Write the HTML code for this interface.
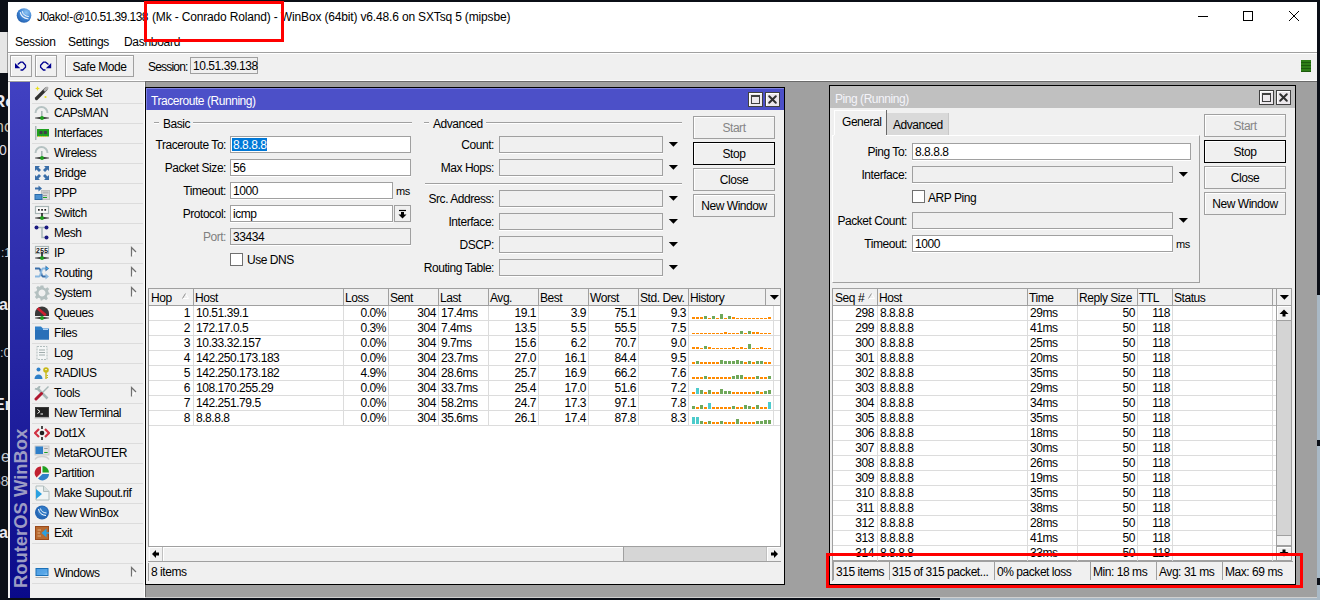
<!DOCTYPE html>
<html><head><meta charset="utf-8"><style>
html,body{margin:0;padding:0;width:1320px;height:600px;overflow:hidden;background:#0b0f17}
div,span,svg{position:absolute}
.t{font-family:"Liberation Sans",sans-serif;white-space:nowrap;line-height:14px;color:#000}
</style></head><body>
<div style="left:0px;top:0px;width:1320px;height:600px;background:#0b0f17"></div>
<div style="left:0px;top:32px;width:8px;height:41px;background:#e6e6e6"></div>
<div style="left:7px;top:32px;width:1px;height:41px;background:#9a9a9a"></div>
<div style="left:940px;top:598px;width:380px;height:2px;background:#a9b9c6"></div>
<div style="left:0;top:0;width:8px;height:600px;overflow:hidden">
<span class="t" style="left:-7px;top:93px;line-height:18px;font-weight:bold;font-size:17px;color:#e8e8f0">Ro</span>
<span class="t" style="left:-5px;top:118px;line-height:18px;font-size:16px;color:#c8c0b0">nc</span>
<span class="t" style="left:-1px;top:141px;line-height:18px;font-size:14px;color:#d8d8e0">0</span>
<span class="t" style="left:1px;top:244px;line-height:18px;font-size:12px;color:#c0c8d0">:1</span>
<span class="t" style="left:-1px;top:296px;line-height:18px;font-weight:bold;font-size:16px;color:#e8e8f0">a</span>
<span class="t" style="left:0px;top:344px;line-height:18px;font-size:13px;color:#c0c8d0">:0</span>
<span class="t" style="left:-6px;top:396px;line-height:18px;font-weight:bold;font-size:16px;color:#e8e8f0">Er</span>
<span class="t" style="left:1px;top:448px;line-height:18px;font-size:16px;color:#c0c8d0">e</span>
<span class="t" style="left:-7px;top:472px;line-height:18px;font-size:14px;color:#c0c8d0">58</span>
<span class="t" style="left:-1px;top:524px;line-height:18px;font-weight:bold;font-size:16px;color:#e8e8f0">a</span>
</div>
<div style="left:8px;top:2px;width:1309px;height:50px;background:#fff"></div>
<div style="left:8px;top:52px;width:1309px;height:1px;background:#a0a0a0"></div>
<div style="left:8px;top:53px;width:1309px;height:1px;background:#fff"></div>
<div style="left:8px;top:54px;width:1309px;height:26px;background:#f0f0f0"></div>
<div style="left:8px;top:80px;width:1309px;height:1px;background:#fff"></div>
<div style="left:8px;top:81px;width:137px;height:1px;background:#a0a0a0"></div>
<svg style="left:16px;top:8px" width="16" height="16" viewBox="0 0 16 16"><defs><radialGradient id="lg" cx="0.65" cy="0.3" r="0.8"><stop offset="0" stop-color="#8cc4f4"/><stop offset="0.6" stop-color="#3a7fcf"/><stop offset="1" stop-color="#1f5aa8"/></radialGradient></defs><circle cx="8" cy="7.5" r="7.3" fill="url(#lg)"/><path d="M4.2 4.2 Q5 10 12.5 11" stroke="#fff" stroke-width="1.1" fill="none" opacity="0.9"/><path d="M6.3 3.2 Q7 8 12.8 8.6" stroke="#fff" stroke-width="1" fill="none" opacity="0.9"/></svg>
<span class="t" style="left:37px;top:10px;font-size:12px;letter-spacing:-0.53px;color:#000">J0ako!-@10.51.39.138</span>
<span class="t" style="left:152px;top:10px;font-size:12px;letter-spacing:-0.16px;color:#000">(Mk - Conrado Roland) - WinBox (64bit) v6.48.6 on SXTsq 5 (mipsbe)</span>
<div style="left:1198px;top:16px;width:10px;height:1px;background:#000"></div>
<div style="left:1243px;top:11px;width:10px;height:10px;border:1px solid #000;box-sizing:border-box"></div>
<svg style="left:1288px;top:10px" width="12" height="12" viewBox="0 0 12 12"><path d="M1 1L11 11M11 1L1 11" stroke="#000" stroke-width="1"/></svg>
<span class="t" style="left:15px;top:35px;font-size:12px;letter-spacing:-0.3px;">Session</span>
<span class="t" style="left:68px;top:35px;font-size:12px;letter-spacing:-0.3px;">Settings</span>
<span class="t" style="left:124px;top:35px;font-size:12px;letter-spacing:-0.3px;">Dashboard</span>
<div style="left:10px;top:55px;width:22px;height:22px;background:#f0f0f0;border:1px solid #a0a0a0;box-sizing:border-box;box-shadow:inset 1px 1px #fff;"></div>
<div style="left:35px;top:55px;width:22px;height:22px;background:#f0f0f0;border:1px solid #a0a0a0;box-sizing:border-box;box-shadow:inset 1px 1px #fff;"></div>
<svg style="left:10px;top:55px" width="22" height="22" viewBox="10 55 22 22"><path d="M15 63V68.3H20.3Z" fill="#000090"/><path d="M17.7 64.6L20.6 62.2H22.8L25.5 65.2V67.2L22.7 70H20.5" stroke="#000090" stroke-width="1.3" fill="none"/></svg>
<svg style="left:35px;top:55px" width="22" height="22" viewBox="35 55 22 22"><path d="M51.2 63V68.3H45.9Z" fill="#000090"/><path d="M48.5 64.6L45.6 62.2H43.4L40.6 65.2V67.2L43.4 70H45.5" stroke="#000090" stroke-width="1.3" fill="none"/></svg>
<div style="left:65px;top:55px;width:69px;height:22px;background:#f0f0f0;border:1px solid #a0a0a0;box-sizing:border-box;box-shadow:inset 1px 1px #fff;"></div>
<span class="t" style="left:65px;width:69px;text-align:center;top:60px;font-size:12px;letter-spacing:-0.45px;">Safe Mode</span>
<span class="t" style="left:148px;top:60px;font-size:12px;letter-spacing:-0.8px;">Session:</span>
<div style="left:190px;top:57px;width:68px;height:17px;background:#f0f0f0;border:1px solid #a0a0a0;box-sizing:border-box"></div>
<span class="t" style="left:193px;top:59px;font-size:12px;letter-spacing:-0.45px;">10.51.39.138</span>
<div style="left:1301px;top:60px;width:10px;height:12px;background:#2e7d17;background-image:repeating-linear-gradient(#2e7d17 0 2px,#1c5a0c 2px 3px)"></div>
<div style="left:8px;top:82px;width:137px;height:516px;background:#f0f0f0"></div>
<div style="left:10px;top:82px;width:20px;height:516px;background:linear-gradient(#4141c2,#2424a2 55%,#0a0a8a)"></div>
<div style="left:144px;top:82px;width:1px;height:516px;background:#fff"></div>
<span class="t" style="left:14px;top:588px;font-size:18.4px;font-weight:bold;letter-spacing:0px;color:#9c9cc4;transform-origin:0 0;transform:rotate(-90deg)">RouterOS WinBox</span>
<div style="left:32px;top:103px;width:111px;height:1px;background:#dcdcdc"></div>
<span class="t" style="left:54px;top:86px;font-size:12px;letter-spacing:-0.45px;">Quick Set</span>
<svg style="left:34px;top:85px" width="16" height="16" viewBox="0 0 16 16"><defs><linearGradient id="fade" gradientUnits="userSpaceOnUse" x1="0" y1="0" x2="16" y2="0"><stop offset="0" stop-color="#000" stop-opacity="0.15"/><stop offset="0.5" stop-color="#000"/><stop offset="1" stop-color="#000" stop-opacity="0.15"/></linearGradient></defs><path d="M2.5 13.5 L12 4" stroke="#303030" stroke-width="3.2" stroke-linecap="round"/><path d="M11 5 L13 3" stroke="#b0b0b0" stroke-width="3" stroke-linecap="round"/><path d="M3.5 1 L4.2 2.8 L6 3.5 L4.2 4.2 L3.5 6 L2.8 4.2 L1 3.5 L2.8 2.8Z" fill="#e8e020"/><circle cx="11.5" cy="12" r="1.1" fill="#e8e020"/></svg>
<div style="left:32px;top:123px;width:111px;height:1px;background:#dcdcdc"></div>
<span class="t" style="left:54px;top:106px;font-size:12px;letter-spacing:-0.45px;">CAPsMAN</span>
<svg style="left:34px;top:105px" width="16" height="16" viewBox="0 0 16 16"><defs><linearGradient id="fade" gradientUnits="userSpaceOnUse" x1="0" y1="0" x2="16" y2="0"><stop offset="0" stop-color="#000" stop-opacity="0.15"/><stop offset="0.5" stop-color="#000"/><stop offset="1" stop-color="#000" stop-opacity="0.15"/></linearGradient></defs><path d="M1.5 8 A6 6 0 0 1 13.5 8" stroke="#b5c2c2" stroke-width="2" fill="none"/><rect x="7" y="6" width="1.6" height="7" fill="#a8b5b5"/><path d="M1 13H15" stroke="url(#fade)" stroke-width="2"/><circle cx="8" cy="13" r="2" fill="#1fa01f"/></svg>
<div style="left:32px;top:143px;width:111px;height:1px;background:#dcdcdc"></div>
<span class="t" style="left:54px;top:126px;font-size:12px;letter-spacing:-0.45px;">Interfaces</span>
<svg style="left:34px;top:125px" width="16" height="16" viewBox="0 0 16 16"><defs><linearGradient id="fade" gradientUnits="userSpaceOnUse" x1="0" y1="0" x2="16" y2="0"><stop offset="0" stop-color="#000" stop-opacity="0.15"/><stop offset="0.5" stop-color="#000"/><stop offset="1" stop-color="#000" stop-opacity="0.15"/></linearGradient></defs><rect x="1" y="1" width="1.5" height="14" fill="#a9b7b7"/><rect x="3" y="4" width="12" height="7.5" fill="#20a020"/><rect x="5.5" y="6" width="3" height="3" fill="#404048"/><rect x="9.8" y="6" width="3" height="3" fill="#404048"/><path d="M4 11.5H14" stroke="#e8d020" stroke-width="1" stroke-dasharray="1 1"/></svg>
<div style="left:32px;top:163px;width:111px;height:1px;background:#dcdcdc"></div>
<span class="t" style="left:54px;top:146px;font-size:12px;letter-spacing:-0.45px;">Wireless</span>
<svg style="left:34px;top:145px" width="16" height="16" viewBox="0 0 16 16"><defs><linearGradient id="fade" gradientUnits="userSpaceOnUse" x1="0" y1="0" x2="16" y2="0"><stop offset="0" stop-color="#000" stop-opacity="0.15"/><stop offset="0.5" stop-color="#000"/><stop offset="1" stop-color="#000" stop-opacity="0.15"/></linearGradient></defs><path d="M1.5 8 A6 6 0 0 1 13.5 8" stroke="#b5c2c2" stroke-width="2" fill="none"/><rect x="7" y="6" width="1.6" height="7" fill="#a8b5b5"/><path d="M1 13H15" stroke="url(#fade)" stroke-width="2"/><circle cx="8" cy="13" r="2" fill="#1fa01f"/></svg>
<div style="left:32px;top:183px;width:111px;height:1px;background:#dcdcdc"></div>
<span class="t" style="left:54px;top:166px;font-size:12px;letter-spacing:-0.45px;">Bridge</span>
<svg style="left:34px;top:165px" width="16" height="16" viewBox="0 0 16 16"><defs><linearGradient id="fade" gradientUnits="userSpaceOnUse" x1="0" y1="0" x2="16" y2="0"><stop offset="0" stop-color="#000" stop-opacity="0.15"/><stop offset="0.5" stop-color="#000"/><stop offset="1" stop-color="#000" stop-opacity="0.15"/></linearGradient></defs><g fill="#3a6ea8"><path d="M1 1H6L4.5 2.5L7 5L5 7L2.5 4.5L1 6Z"/><path d="M15 1H10L11.5 2.5L9 5L11 7L13.5 4.5L15 6Z"/><path d="M1 15H6L4.5 13.5L7 11L5 9L2.5 11.5L1 10Z"/><path d="M15 15H10L11.5 13.5L9 11L11 9L13.5 11.5L15 10Z"/></g></svg>
<div style="left:32px;top:203px;width:111px;height:1px;background:#dcdcdc"></div>
<span class="t" style="left:54px;top:186px;font-size:12px;letter-spacing:-0.45px;">PPP</span>
<svg style="left:34px;top:185px" width="16" height="16" viewBox="0 0 16 16"><defs><linearGradient id="fade" gradientUnits="userSpaceOnUse" x1="0" y1="0" x2="16" y2="0"><stop offset="0" stop-color="#000" stop-opacity="0.15"/><stop offset="0.5" stop-color="#000"/><stop offset="1" stop-color="#000" stop-opacity="0.15"/></linearGradient></defs><path d="M1 3.5H5" stroke="#3a6ea8" stroke-width="2"/><path d="M4.5 0.5L8 3.5L4.5 6.5Z" fill="#3a6ea8"/><rect x="7.5" y="5.5" width="8" height="9" fill="#d8d8d8" stroke="#c0c0c0" stroke-width="1"/><rect x="8.5" y="6.5" width="6" height="2" fill="#b8b8b8"/><rect x="9" y="10" width="4" height="0.8" fill="#909090"/><rect x="9" y="12" width="4" height="1" fill="#20a020"/><rect x="1" y="9.5" width="7" height="5" fill="#4a90d0" stroke="#2a6aa8" stroke-width="1"/></svg>
<div style="left:32px;top:223px;width:111px;height:1px;background:#dcdcdc"></div>
<span class="t" style="left:54px;top:206px;font-size:12px;letter-spacing:-0.45px;">Switch</span>
<svg style="left:34px;top:205px" width="16" height="16" viewBox="0 0 16 16"><defs><linearGradient id="fade" gradientUnits="userSpaceOnUse" x1="0" y1="0" x2="16" y2="0"><stop offset="0" stop-color="#000" stop-opacity="0.15"/><stop offset="0.5" stop-color="#000"/><stop offset="1" stop-color="#000" stop-opacity="0.15"/></linearGradient></defs><rect x="1.5" y="1.5" width="13" height="7" fill="#fafafa" stroke="#a8b5b5" stroke-width="1.2"/><rect x="4" y="4" width="1.7" height="1.7" fill="#202020"/><rect x="7.2" y="4" width="1.7" height="1.7" fill="#202020"/><rect x="10.4" y="4" width="1.7" height="1.7" fill="#202020"/><rect x="7.2" y="8" width="1.6" height="5" fill="#202020"/><path d="M1 13H15" stroke="url(#fade)" stroke-width="2"/><circle cx="8" cy="13" r="2" fill="#1fa01f"/></svg>
<div style="left:32px;top:243px;width:111px;height:1px;background:#dcdcdc"></div>
<span class="t" style="left:54px;top:226px;font-size:12px;letter-spacing:-0.45px;">Mesh</span>
<svg style="left:34px;top:225px" width="16" height="16" viewBox="0 0 16 16"><defs><linearGradient id="fade" gradientUnits="userSpaceOnUse" x1="0" y1="0" x2="16" y2="0"><stop offset="0" stop-color="#000" stop-opacity="0.15"/><stop offset="0.5" stop-color="#000"/><stop offset="1" stop-color="#000" stop-opacity="0.15"/></linearGradient></defs><path d="M3 2.5H12.5M8 2.5V12.5H12.5" stroke="#a8b8b8" stroke-width="1.5" fill="none"/><circle cx="2.5" cy="2.5" r="2" fill="#1a1a80"/><circle cx="12.5" cy="2.5" r="2" fill="#1a1a80"/><circle cx="12.5" cy="12.5" r="2" fill="#1a1a80"/></svg>
<div style="left:32px;top:263px;width:111px;height:1px;background:#dcdcdc"></div>
<span class="t" style="left:54px;top:246px;font-size:12px;letter-spacing:-0.45px;">IP</span>
<svg style="left:34px;top:245px" width="16" height="16" viewBox="0 0 16 16"><defs><linearGradient id="fade" gradientUnits="userSpaceOnUse" x1="0" y1="0" x2="16" y2="0"><stop offset="0" stop-color="#000" stop-opacity="0.15"/><stop offset="0.5" stop-color="#000"/><stop offset="1" stop-color="#000" stop-opacity="0.15"/></linearGradient></defs><rect x="1.5" y="1.5" width="13" height="7" fill="#fafafa" stroke="#a8b5b5" stroke-width="1.2"/><text x="8" y="7.6" font-family="Liberation Mono" font-weight="bold" font-size="7" text-anchor="middle" fill="#202020">255</text><rect x="7.2" y="8" width="1.6" height="5" fill="#202020"/><path d="M1 13H15" stroke="url(#fade)" stroke-width="2"/><circle cx="8" cy="13" r="2" fill="#1fa01f"/></svg>
<svg style="left:129px;top:246px" width="8" height="12" viewBox="0 0 8 12"><path d="M6.5 6 L2.5 10" stroke="#fff" stroke-width="1.2"/><path d="M2.5 10.5 V1.5 L7 6" fill="none" stroke="#707070" stroke-width="1.2"/></svg>
<div style="left:32px;top:283px;width:111px;height:1px;background:#dcdcdc"></div>
<span class="t" style="left:54px;top:266px;font-size:12px;letter-spacing:-0.45px;">Routing</span>
<svg style="left:34px;top:265px" width="16" height="16" viewBox="0 0 16 16"><defs><linearGradient id="fade" gradientUnits="userSpaceOnUse" x1="0" y1="0" x2="16" y2="0"><stop offset="0" stop-color="#000" stop-opacity="0.15"/><stop offset="0.5" stop-color="#000"/><stop offset="1" stop-color="#000" stop-opacity="0.15"/></linearGradient></defs><path d="M1 3.5H5C7 3.5 7 11.5 9 11.5H12" stroke="#3a6ea8" stroke-width="2" fill="none"/><path d="M1 11.5H5C7 11.5 7 3.5 9 3.5H12" stroke="#8ab8e0" stroke-width="2" fill="none"/><path d="M11.5 0.5L15 3.5L11.5 6.5Z" fill="#3a6ea8"/><path d="M11.5 8.5L15 11.5L11.5 14.5Z" fill="#8ab8e0"/><circle cx="13" cy="3.5" r="1" fill="#40b0f0"/></svg>
<svg style="left:129px;top:266px" width="8" height="12" viewBox="0 0 8 12"><path d="M6.5 6 L2.5 10" stroke="#fff" stroke-width="1.2"/><path d="M2.5 10.5 V1.5 L7 6" fill="none" stroke="#707070" stroke-width="1.2"/></svg>
<div style="left:32px;top:303px;width:111px;height:1px;background:#dcdcdc"></div>
<span class="t" style="left:54px;top:286px;font-size:12px;letter-spacing:-0.45px;">System</span>
<svg style="left:34px;top:285px" width="16" height="16" viewBox="0 0 16 16"><defs><linearGradient id="fade" gradientUnits="userSpaceOnUse" x1="0" y1="0" x2="16" y2="0"><stop offset="0" stop-color="#000" stop-opacity="0.15"/><stop offset="0.5" stop-color="#000"/><stop offset="1" stop-color="#000" stop-opacity="0.15"/></linearGradient></defs><g fill="#b4c0c0"><path fill-rule="evenodd" d="M6.6 0.5H9.4L9.8 2.6L11.6 3.4L13.4 2.2L15.2 4L14 5.8L14.7 7.6L15.5 8V9.4L13.6 9.8L12.8 11.6L13.9 13.4L12.1 15.2L10.3 14L8.5 14.7L8.1 15.5H6.7L6.3 13.6L4.5 12.8L2.7 13.9L0.9 12.1L2.1 10.3L1.4 8.5L0.5 8.1V6.7L2.4 6.3L3.2 4.5L2.1 2.7L3.9 0.9L5.7 2.1L6.2 1.4Z M8 4.5A3.5 3.5 0 1 0 8.01 4.5Z"/></g></svg>
<svg style="left:129px;top:286px" width="8" height="12" viewBox="0 0 8 12"><path d="M6.5 6 L2.5 10" stroke="#fff" stroke-width="1.2"/><path d="M2.5 10.5 V1.5 L7 6" fill="none" stroke="#707070" stroke-width="1.2"/></svg>
<div style="left:32px;top:323px;width:111px;height:1px;background:#dcdcdc"></div>
<span class="t" style="left:54px;top:306px;font-size:12px;letter-spacing:-0.45px;">Queues</span>
<svg style="left:34px;top:305px" width="16" height="16" viewBox="0 0 16 16"><defs><linearGradient id="fade" gradientUnits="userSpaceOnUse" x1="0" y1="0" x2="16" y2="0"><stop offset="0" stop-color="#000" stop-opacity="0.15"/><stop offset="0.5" stop-color="#000"/><stop offset="1" stop-color="#000" stop-opacity="0.15"/></linearGradient></defs><path d="M1 11V8.5A7 7 0 0 1 15 8.5V11Z" fill="#383838"/><path d="M3.6 3.2 L11.8 10.2" stroke="#d02030" stroke-width="2.6"/><path d="M1 13H15" stroke="url(#fade)" stroke-width="2"/><circle cx="8" cy="13" r="2" fill="#1fa01f"/></svg>
<div style="left:32px;top:343px;width:111px;height:1px;background:#dcdcdc"></div>
<span class="t" style="left:54px;top:326px;font-size:12px;letter-spacing:-0.45px;">Files</span>
<svg style="left:34px;top:325px" width="16" height="16" viewBox="0 0 16 16"><defs><linearGradient id="fade" gradientUnits="userSpaceOnUse" x1="0" y1="0" x2="16" y2="0"><stop offset="0" stop-color="#000" stop-opacity="0.15"/><stop offset="0.5" stop-color="#000"/><stop offset="1" stop-color="#000" stop-opacity="0.15"/></linearGradient></defs><path d="M1 1.5H7L9 3.5H15V14.5H1Z" fill="#2f7fc8"/><path d="M1 5H15V14.5H1Z" fill="#2a70b8"/><rect x="9" y="4" width="5" height="0.8" fill="#d8ecff"/></svg>
<div style="left:32px;top:363px;width:111px;height:1px;background:#dcdcdc"></div>
<span class="t" style="left:54px;top:346px;font-size:12px;letter-spacing:-0.45px;">Log</span>
<svg style="left:34px;top:345px" width="16" height="16" viewBox="0 0 16 16"><defs><linearGradient id="fade" gradientUnits="userSpaceOnUse" x1="0" y1="0" x2="16" y2="0"><stop offset="0" stop-color="#000" stop-opacity="0.15"/><stop offset="0.5" stop-color="#000"/><stop offset="1" stop-color="#000" stop-opacity="0.15"/></linearGradient></defs><path d="M3 1.5H13V14.5H3Z" fill="#f4f6f6" stroke="#b0bcbc" stroke-width="1" stroke-dasharray="2 1"/><path d="M5 5H11M5 7.5H11M5 10H11" stroke="#a0acac" stroke-width="1"/></svg>
<div style="left:32px;top:383px;width:111px;height:1px;background:#dcdcdc"></div>
<span class="t" style="left:54px;top:366px;font-size:12px;letter-spacing:-0.45px;">RADIUS</span>
<svg style="left:34px;top:365px" width="16" height="16" viewBox="0 0 16 16"><defs><linearGradient id="fade" gradientUnits="userSpaceOnUse" x1="0" y1="0" x2="16" y2="0"><stop offset="0" stop-color="#000" stop-opacity="0.15"/><stop offset="0.5" stop-color="#000"/><stop offset="1" stop-color="#000" stop-opacity="0.15"/></linearGradient></defs><circle cx="4.5" cy="4.5" r="2" fill="#2f7fc8"/><path d="M0.5 14 C0.5 8 8.5 8 8.5 14Z" fill="#2f7fc8"/><circle cx="12" cy="5" r="2.8" fill="#c8b818"/><rect x="11.3" y="7" width="1.4" height="7" fill="#c8b818"/><rect x="12.5" y="10" width="1.5" height="1" fill="#c8b818"/><rect x="12.5" y="12" width="1.5" height="1" fill="#c8b818"/><rect x="11" y="4.3" width="2" height="0.8" fill="#fff"/></svg>
<div style="left:32px;top:403px;width:111px;height:1px;background:#dcdcdc"></div>
<span class="t" style="left:54px;top:386px;font-size:12px;letter-spacing:-0.45px;">Tools</span>
<svg style="left:34px;top:385px" width="16" height="16" viewBox="0 0 16 16"><defs><linearGradient id="fade" gradientUnits="userSpaceOnUse" x1="0" y1="0" x2="16" y2="0"><stop offset="0" stop-color="#000" stop-opacity="0.15"/><stop offset="0.5" stop-color="#000"/><stop offset="1" stop-color="#000" stop-opacity="0.15"/></linearGradient></defs><path d="M3 3 L13.5 13.5" stroke="#a8b8b8" stroke-width="2.5"/><path d="M1 3.5A3 3 0 0 0 5.5 1" stroke="#a8b8b8" stroke-width="2" fill="none"/><path d="M14.5 1.5 L8 8" stroke="#a8b8b8" stroke-width="1.5"/><path d="M2 14 L7.5 8.5" stroke="#b01830" stroke-width="3" stroke-linecap="round"/></svg>
<svg style="left:129px;top:386px" width="8" height="12" viewBox="0 0 8 12"><path d="M6.5 6 L2.5 10" stroke="#fff" stroke-width="1.2"/><path d="M2.5 10.5 V1.5 L7 6" fill="none" stroke="#707070" stroke-width="1.2"/></svg>
<div style="left:32px;top:423px;width:111px;height:1px;background:#dcdcdc"></div>
<span class="t" style="left:54px;top:406px;font-size:12px;letter-spacing:-0.45px;">New Terminal</span>
<svg style="left:34px;top:405px" width="16" height="16" viewBox="0 0 16 16"><defs><linearGradient id="fade" gradientUnits="userSpaceOnUse" x1="0" y1="0" x2="16" y2="0"><stop offset="0" stop-color="#000" stop-opacity="0.15"/><stop offset="0.5" stop-color="#000"/><stop offset="1" stop-color="#000" stop-opacity="0.15"/></linearGradient></defs><rect x="1" y="2" width="14" height="10.5" fill="#383838"/><rect x="2" y="3" width="12" height="8.5" fill="#202020"/><path d="M3.5 4.5L6 6.5L3.5 8.5" stroke="#fff" stroke-width="1" fill="none"/><path d="M6.5 9H9" stroke="#fff" stroke-width="1"/><path d="M0.5 13H15.5" stroke="#c0c0c0" stroke-width="1"/></svg>
<div style="left:32px;top:443px;width:111px;height:1px;background:#dcdcdc"></div>
<span class="t" style="left:54px;top:426px;font-size:12px;letter-spacing:-0.45px;">Dot1X</span>
<svg style="left:34px;top:425px" width="16" height="16" viewBox="0 0 16 16"><defs><linearGradient id="fade" gradientUnits="userSpaceOnUse" x1="0" y1="0" x2="16" y2="0"><stop offset="0" stop-color="#000" stop-opacity="0.15"/><stop offset="0.5" stop-color="#000"/><stop offset="1" stop-color="#000" stop-opacity="0.15"/></linearGradient></defs><path d="M5 4L1 8L5 12" stroke="#d03040" stroke-width="2.2" fill="none"/><path d="M11 4L15 8L11 12" stroke="#d03040" stroke-width="2.2" fill="none"/><circle cx="8" cy="8" r="2.3" fill="#202020"/><rect x="7.2" y="1" width="1.6" height="3" fill="#202020"/><rect x="7.2" y="12" width="1.6" height="3" fill="#202020"/></svg>
<div style="left:32px;top:463px;width:111px;height:1px;background:#dcdcdc"></div>
<span class="t" style="left:54px;top:446px;font-size:12px;letter-spacing:-0.45px;">MetaROUTER</span>
<svg style="left:34px;top:445px" width="16" height="16" viewBox="0 0 16 16"><defs><linearGradient id="fade" gradientUnits="userSpaceOnUse" x1="0" y1="0" x2="16" y2="0"><stop offset="0" stop-color="#000" stop-opacity="0.15"/><stop offset="0.5" stop-color="#000"/><stop offset="1" stop-color="#000" stop-opacity="0.15"/></linearGradient></defs><rect x="1" y="1" width="14" height="9" fill="#e0e0e0" stroke="#c0c0c0" stroke-width="0.8"/><rect x="1.5" y="1.5" width="7.5" height="7.5" fill="#2f7fc8"/><rect x="10.2" y="3" width="3.5" height="1" fill="#a0a0a0"/><rect x="10.2" y="7" width="3.5" height="1" fill="#20a020"/><path d="M1 14.5 C3 10.5 13 10.5 15 14.5" stroke="#d0d0d0" stroke-width="1.5" fill="none"/></svg>
<div style="left:32px;top:483px;width:111px;height:1px;background:#dcdcdc"></div>
<span class="t" style="left:54px;top:466px;font-size:12px;letter-spacing:-0.45px;">Partition</span>
<svg style="left:34px;top:465px" width="16" height="16" viewBox="0 0 16 16"><defs><linearGradient id="fade" gradientUnits="userSpaceOnUse" x1="0" y1="0" x2="16" y2="0"><stop offset="0" stop-color="#000" stop-opacity="0.15"/><stop offset="0.5" stop-color="#000"/><stop offset="1" stop-color="#000" stop-opacity="0.15"/></linearGradient></defs><path d="M7 1.5A6.5 6.5 0 0 0 2.5 12.5L7 8Z" fill="#c02030"/><path d="M8.5 1A6.5 6.5 0 0 1 15 7.5H8.5Z" fill="#20a020"/><path d="M15 9A6.5 6.5 0 0 1 4 13.5L8.5 9Z" fill="#2f7fc8"/></svg>
<div style="left:32px;top:503px;width:111px;height:1px;background:#dcdcdc"></div>
<span class="t" style="left:54px;top:486px;font-size:12px;letter-spacing:-0.45px;">Make Supout.rif</span>
<svg style="left:34px;top:485px" width="16" height="16" viewBox="0 0 16 16"><defs><linearGradient id="fade" gradientUnits="userSpaceOnUse" x1="0" y1="0" x2="16" y2="0"><stop offset="0" stop-color="#000" stop-opacity="0.15"/><stop offset="0.5" stop-color="#000"/><stop offset="1" stop-color="#000" stop-opacity="0.15"/></linearGradient></defs><path d="M2 1H9.5L15 6.5V15H2Z" fill="#f0f4f4" stroke="#b0bcbc" stroke-width="1"/><path d="M9.5 1V6.5H15" fill="#d8e0e0" stroke="#b0bcbc" stroke-width="1"/><path d="M2 4L8 9L2 14Z" fill="#2aa0e0"/></svg>
<div style="left:32px;top:523px;width:111px;height:1px;background:#dcdcdc"></div>
<span class="t" style="left:54px;top:506px;font-size:12px;letter-spacing:-0.45px;">New WinBox</span>
<svg style="left:34px;top:505px" width="16" height="16" viewBox="0 0 16 16"><defs><linearGradient id="fade" gradientUnits="userSpaceOnUse" x1="0" y1="0" x2="16" y2="0"><stop offset="0" stop-color="#000" stop-opacity="0.15"/><stop offset="0.5" stop-color="#000"/><stop offset="1" stop-color="#000" stop-opacity="0.15"/></linearGradient></defs><circle cx="8" cy="7.5" r="7" fill="#2566b4"/><circle cx="8.5" cy="6.5" r="5" fill="#3a86d0" opacity="0.6"/><path d="M4.5 4 Q5.5 10 12 10.5" stroke="#fff" stroke-width="1" fill="none"/><path d="M6.5 3.5 Q7.2 7.5 12.5 8" stroke="#fff" stroke-width="0.9" fill="none"/></svg>
<div style="left:32px;top:543px;width:111px;height:1px;background:#dcdcdc"></div>
<span class="t" style="left:54px;top:526px;font-size:12px;letter-spacing:-0.45px;">Exit</span>
<svg style="left:34px;top:525px" width="16" height="16" viewBox="0 0 16 16"><defs><linearGradient id="fade" gradientUnits="userSpaceOnUse" x1="0" y1="0" x2="16" y2="0"><stop offset="0" stop-color="#000" stop-opacity="0.15"/><stop offset="0.5" stop-color="#000"/><stop offset="1" stop-color="#000" stop-opacity="0.15"/></linearGradient></defs><rect x="1" y="1" width="14" height="14" fill="#9a4a1a"/><rect x="2" y="2" width="12" height="12" fill="#b86a30"/><path d="M3.5 5H7M3.5 8H6M3.5 11H7" stroke="#e0b080" stroke-width="1"/><path d="M7.5 8L12.5 3.5V12.5Z" fill="#2aa0e0"/><path d="M12 8H15" stroke="#2aa0e0" stroke-width="1.5"/></svg>
<div style="left:32px;top:563px;width:111px;height:1px;background:#dcdcdc"></div>
<div style="left:32px;top:583px;width:111px;height:1px;background:#dcdcdc"></div>
<span class="t" style="left:54px;top:566px;font-size:12px;letter-spacing:-0.45px;">Windows</span>
<svg style="left:34px;top:565px" width="16" height="16" viewBox="0 0 16 16"><defs><linearGradient id="wg" x1="0" y1="0" x2="1" y2="1"><stop offset="0" stop-color="#4a9ae0"/><stop offset="0.7" stop-color="#5aa8e8"/><stop offset="1" stop-color="#a8d4f4"/></linearGradient></defs><rect x="2" y="3.5" width="12" height="7" fill="url(#wg)" stroke="#1a70b8" stroke-width="1"/><path d="M1.5 12.5H14.5" stroke="#b0b0b0" stroke-width="1"/></svg>
<svg style="left:129px;top:566px" width="8" height="12" viewBox="0 0 8 12"><path d="M6.5 6 L2.5 10" stroke="#fff" stroke-width="1.2"/><path d="M2.5 10.5 V1.5 L7 6" fill="none" stroke="#707070" stroke-width="1.2"/></svg>
<div style="left:145px;top:81px;width:1172px;height:516px;background:#a0a0a0"></div>
<div style="left:145px;top:81px;width:1172px;height:1px;background:#6a6a6a"></div>
<div style="left:145px;top:81px;width:1px;height:516px;background:#6a6a6a"></div>
<div style="left:145px;top:597px;width:1172px;height:1px;background:#d0d0d0"></div>
<div style="left:145px;top:87px;width:640px;height:498px;background:#000"></div>
<div style="left:146px;top:88px;width:638px;height:496px;background:#f0f0f0"></div>
<div style="left:146px;top:88px;width:638px;height:22px;background:#4c50c8"></div>
<div style="left:146px;top:88px;width:638px;height:1px;background:#7f82e0"></div>
<div style="left:146px;top:88px;width:1px;height:22px;background:#7f82e0"></div>
<span class="t" style="left:151px;top:94px;font-size:12px;letter-spacing:-0.45px;color:#fff">Traceroute (Running)</span>
<div style="left:748px;top:92px;width:15px;height:15px;background:#ece8ec;border:1px solid #404040;box-shadow:inset 1px 1px #fff;box-sizing:border-box"></div>
<div style="left:751px;top:95px;width:9px;height:9px;border:1px solid #404040;border-top-width:2px;box-sizing:border-box"></div>
<div style="left:765px;top:92px;width:15px;height:15px;background:#ece8ec;border:1px solid #404040;box-shadow:inset 1px 1px #fff;box-sizing:border-box"></div>
<svg style="left:765px;top:92px" width="15" height="15" viewBox="0 0 15 15"><path d="M4.2 4.2L10.8 10.8M10.8 4.2L4.2 10.8" stroke="#303030" stroke-width="2" stroke-linecap="round"/></svg>
<div style="left:154px;top:122px;width:5px;height:1px;background:#a0a0a0"></div>
<div style="left:154px;top:123px;width:5px;height:1px;background:#fff"></div>
<span class="t" style="left:163px;top:117px;font-size:12px;letter-spacing:-0.45px;">Basic</span>
<div style="left:193px;top:122px;width:219px;height:1px;background:#a0a0a0"></div>
<div style="left:193px;top:123px;width:219px;height:1px;background:#fff"></div>
<div style="left:424px;top:122px;width:5px;height:1px;background:#a0a0a0"></div>
<div style="left:424px;top:123px;width:5px;height:1px;background:#fff"></div>
<span class="t" style="left:433px;top:117px;font-size:12px;letter-spacing:-0.45px;">Advanced</span>
<div style="left:486px;top:122px;width:196px;height:1px;background:#a0a0a0"></div>
<div style="left:486px;top:123px;width:196px;height:1px;background:#fff"></div>
<span class="t" style="right:1094px;top:138px;font-size:12px;letter-spacing:-0.45px;">Traceroute To:</span>
<div style="left:230px;top:136px;width:181px;height:17px;background:#fff;border:1px solid #a0a0a0;box-sizing:border-box"></div>
<div style="left:232px;top:138px;width:35px;height:13px;background:#0078d7"></div>
<span class="t" style="left:233px;top:138px;font-size:12px;letter-spacing:-0.45px;color:#fff">8.8.8.8</span>
<span class="t" style="right:1094px;top:161px;font-size:12px;letter-spacing:-0.45px;">Packet Size:</span>
<div style="left:230px;top:159px;width:181px;height:17px;background:#fff;border:1px solid #a0a0a0;box-sizing:border-box"></div>
<div style="left:230px;top:176px;width:181px;height:1px;background:#fff"></div>
<span class="t" style="left:233px;top:161px;font-size:12px;letter-spacing:-0.45px;color:#000">56</span>
<span class="t" style="right:1094px;top:184px;font-size:12px;letter-spacing:-0.45px;">Timeout:</span>
<div style="left:230px;top:182px;width:163px;height:17px;background:#fff;border:1px solid #a0a0a0;box-sizing:border-box"></div>
<div style="left:230px;top:199px;width:163px;height:1px;background:#fff"></div>
<span class="t" style="left:233px;top:184px;font-size:12px;letter-spacing:-0.45px;color:#000">1000</span>
<span class="t" style="left:396px;top:184px;font-size:11px;letter-spacing:-0.3px;">ms</span>
<span class="t" style="right:1094px;top:207px;font-size:12px;letter-spacing:-0.45px;">Protocol:</span>
<div style="left:230px;top:205px;width:163px;height:17px;background:#fff;border:1px solid #a0a0a0;box-sizing:border-box"></div>
<div style="left:230px;top:222px;width:163px;height:1px;background:#fff"></div>
<span class="t" style="left:233px;top:207px;font-size:12px;letter-spacing:-0.45px;color:#000">icmp</span>
<div style="left:394px;top:205px;width:17px;height:17px;background:#f0f0f0;border:1px solid #a0a0a0;box-sizing:border-box"></div>
<svg style="left:394px;top:205px" width="17" height="17" viewBox="0 0 17 17"><path d="M5 5.5H12" stroke="#000" stroke-width="1.2"/><rect x="7" y="7" width="3" height="3" fill="#000"/><path d="M4.5 9.5H12.5L8.5 13.5Z" fill="#000"/></svg>
<span class="t" style="right:1094px;top:230px;font-size:12px;letter-spacing:-0.45px;color:#808080">Port:</span>
<div style="left:230px;top:228px;width:181px;height:17px;background:#f0f0f0;border:1px solid #a0a0a0;box-sizing:border-box"></div>
<div style="left:230px;top:245px;width:181px;height:1px;background:#fff"></div>
<span class="t" style="left:233px;top:230px;font-size:12px;letter-spacing:-0.45px;color:#000">33434</span>
<div style="left:230px;top:253px;width:13px;height:13px;background:#fff;border:1px solid #707070;box-sizing:border-box"></div>
<span class="t" style="left:247px;top:253px;font-size:12px;letter-spacing:-0.45px;">Use DNS</span>
<span class="t" style="right:826px;top:138px;font-size:12px;letter-spacing:-0.45px;">Count:</span>
<div style="left:499px;top:136px;width:164px;height:17px;background:#f0f0f0;border:1px solid #a0a0a0;box-sizing:border-box"></div>
<div style="left:499px;top:153px;width:164px;height:1px;background:#fff"></div>
<svg style="left:668px;top:142px" width="11" height="6" viewBox="0 0 11 6"><path d="M0.8 0H10L5.4 4.8Z" fill="#000"/></svg>
<span class="t" style="right:826px;top:161px;font-size:12px;letter-spacing:-0.45px;">Max Hops:</span>
<div style="left:499px;top:159px;width:164px;height:17px;background:#f0f0f0;border:1px solid #a0a0a0;box-sizing:border-box"></div>
<div style="left:499px;top:176px;width:164px;height:1px;background:#fff"></div>
<svg style="left:668px;top:165px" width="11" height="6" viewBox="0 0 11 6"><path d="M0.8 0H10L5.4 4.8Z" fill="#000"/></svg>
<span class="t" style="right:826px;top:192px;font-size:12px;letter-spacing:-0.45px;">Src. Address:</span>
<div style="left:499px;top:190px;width:164px;height:17px;background:#f0f0f0;border:1px solid #a0a0a0;box-sizing:border-box"></div>
<div style="left:499px;top:207px;width:164px;height:1px;background:#fff"></div>
<svg style="left:668px;top:196px" width="11" height="6" viewBox="0 0 11 6"><path d="M0.8 0H10L5.4 4.8Z" fill="#000"/></svg>
<span class="t" style="right:826px;top:215px;font-size:12px;letter-spacing:-0.45px;">Interface:</span>
<div style="left:499px;top:213px;width:164px;height:17px;background:#f0f0f0;border:1px solid #a0a0a0;box-sizing:border-box"></div>
<div style="left:499px;top:230px;width:164px;height:1px;background:#fff"></div>
<svg style="left:668px;top:219px" width="11" height="6" viewBox="0 0 11 6"><path d="M0.8 0H10L5.4 4.8Z" fill="#000"/></svg>
<span class="t" style="right:826px;top:238px;font-size:12px;letter-spacing:-0.45px;">DSCP:</span>
<div style="left:499px;top:236px;width:164px;height:17px;background:#f0f0f0;border:1px solid #a0a0a0;box-sizing:border-box"></div>
<div style="left:499px;top:253px;width:164px;height:1px;background:#fff"></div>
<svg style="left:668px;top:242px" width="11" height="6" viewBox="0 0 11 6"><path d="M0.8 0H10L5.4 4.8Z" fill="#000"/></svg>
<span class="t" style="right:826px;top:261px;font-size:12px;letter-spacing:-0.45px;">Routing Table:</span>
<div style="left:499px;top:259px;width:164px;height:17px;background:#f0f0f0;border:1px solid #a0a0a0;box-sizing:border-box"></div>
<div style="left:499px;top:276px;width:164px;height:1px;background:#fff"></div>
<svg style="left:668px;top:265px" width="11" height="6" viewBox="0 0 11 6"><path d="M0.8 0H10L5.4 4.8Z" fill="#000"/></svg>
<div style="left:425px;top:183px;width:257px;height:1px;background:#a0a0a0"></div>
<div style="left:425px;top:184px;width:257px;height:1px;background:#fff"></div>
<div style="left:693px;top:116px;width:82px;height:23px;background:#f0f0f0;border:1px solid #a0a0a0;box-sizing:border-box;box-shadow:inset 1px 1px #fff;"></div>
<span class="t" style="left:693px;width:82px;text-align:center;top:121px;font-size:12px;letter-spacing:-0.45px;color:#858585">Start</span>
<div style="left:693px;top:142px;width:82px;height:23px;background:#f0f0f0;border:1px solid #000;box-sizing:border-box;box-shadow:inset 1px 1px #fff;"></div>
<span class="t" style="left:693px;width:82px;text-align:center;top:147px;font-size:12px;letter-spacing:-0.45px;">Stop</span>
<div style="left:693px;top:168px;width:82px;height:23px;background:#f0f0f0;border:1px solid #a0a0a0;box-sizing:border-box;box-shadow:inset 1px 1px #fff;"></div>
<span class="t" style="left:693px;width:82px;text-align:center;top:173px;font-size:12px;letter-spacing:-0.45px;">Close</span>
<div style="left:693px;top:194px;width:82px;height:23px;background:#f0f0f0;border:1px solid #a0a0a0;box-sizing:border-box;box-shadow:inset 1px 1px #fff;"></div>
<span class="t" style="left:693px;width:82px;text-align:center;top:199px;font-size:12px;letter-spacing:-0.45px;">New Window</span>
<div style="left:148px;top:288px;width:633px;height:259px;background:#fff;border:1px solid #a0a0a0;box-sizing:border-box"></div>
<div style="left:149px;top:289px;width:631px;height:16px;background:#f0f0f0"></div>
<div style="left:149px;top:305px;width:631px;height:1px;background:#a0a0a0"></div>
<span class="t" style="left:151px;top:291px;font-size:12px;letter-spacing:-0.45px;">Hop</span>
<div style="left:193px;top:289px;width:1px;height:16px;background:#a0a0a0"></div>
<div style="left:193px;top:306px;width:1px;height:120px;background:#dcdcdc"></div>
<span class="t" style="left:195px;top:291px;font-size:12px;letter-spacing:-0.45px;">Host</span>
<div style="left:343px;top:289px;width:1px;height:16px;background:#a0a0a0"></div>
<div style="left:343px;top:306px;width:1px;height:120px;background:#dcdcdc"></div>
<span class="t" style="left:345px;top:291px;font-size:12px;letter-spacing:-0.45px;">Loss</span>
<div style="left:388px;top:289px;width:1px;height:16px;background:#a0a0a0"></div>
<div style="left:388px;top:306px;width:1px;height:120px;background:#dcdcdc"></div>
<span class="t" style="left:390px;top:291px;font-size:12px;letter-spacing:-0.45px;">Sent</span>
<div style="left:438px;top:289px;width:1px;height:16px;background:#a0a0a0"></div>
<div style="left:438px;top:306px;width:1px;height:120px;background:#dcdcdc"></div>
<span class="t" style="left:440px;top:291px;font-size:12px;letter-spacing:-0.45px;">Last</span>
<div style="left:488px;top:289px;width:1px;height:16px;background:#a0a0a0"></div>
<div style="left:488px;top:306px;width:1px;height:120px;background:#dcdcdc"></div>
<span class="t" style="left:490px;top:291px;font-size:12px;letter-spacing:-0.45px;">Avg.</span>
<div style="left:538px;top:289px;width:1px;height:16px;background:#a0a0a0"></div>
<div style="left:538px;top:306px;width:1px;height:120px;background:#dcdcdc"></div>
<span class="t" style="left:540px;top:291px;font-size:12px;letter-spacing:-0.45px;">Best</span>
<div style="left:588px;top:289px;width:1px;height:16px;background:#a0a0a0"></div>
<div style="left:588px;top:306px;width:1px;height:120px;background:#dcdcdc"></div>
<span class="t" style="left:590px;top:291px;font-size:12px;letter-spacing:-0.45px;">Worst</span>
<div style="left:638px;top:289px;width:1px;height:16px;background:#a0a0a0"></div>
<div style="left:638px;top:306px;width:1px;height:120px;background:#dcdcdc"></div>
<span class="t" style="left:640px;top:291px;font-size:12px;letter-spacing:-0.45px;">Std. Dev.</span>
<div style="left:688px;top:289px;width:1px;height:16px;background:#a0a0a0"></div>
<div style="left:688px;top:306px;width:1px;height:120px;background:#dcdcdc"></div>
<span class="t" style="left:690px;top:291px;font-size:12px;letter-spacing:-0.45px;">History</span>
<div style="left:773px;top:306px;width:1px;height:120px;background:#dcdcdc"></div>
<div style="left:765px;top:289px;width:1px;height:16px;background:#a0a0a0"></div>
<svg style="left:769px;top:295px" width="11" height="6" viewBox="0 0 11 6"><path d="M0.8 0H10L5.4 4.8Z" fill="#000"/></svg>
<svg style="left:182px;top:293px" width="7" height="6" viewBox="0 0 7 6"><path d="M6.5 5.5H0.5" stroke="#fff" stroke-width="1"/><path d="M3.5 0.5L6.5 5.5" stroke="#fff" stroke-width="1"/><path d="M0.5 5.5L3.5 0.5" stroke="#909090" stroke-width="1"/></svg>
<div style="left:149px;top:320px;width:631px;height:1px;background:#dcdcdc"></div>
<span class="t" style="right:1130px;top:306px;font-size:12px;letter-spacing:-0.45px;">1</span>
<span class="t" style="left:196px;top:306px;font-size:12px;letter-spacing:-0.45px;">10.51.39.1</span>
<span class="t" style="right:934px;top:306px;font-size:12px;letter-spacing:-0.45px;">0.0%</span>
<span class="t" style="right:884px;top:306px;font-size:12px;letter-spacing:-0.45px;">304</span>
<span class="t" style="left:441px;top:306px;font-size:12px;letter-spacing:-0.45px;">17.4ms</span>
<span class="t" style="right:784px;top:306px;font-size:12px;letter-spacing:-0.45px;">19.1</span>
<span class="t" style="right:734px;top:306px;font-size:12px;letter-spacing:-0.45px;">3.9</span>
<span class="t" style="right:684px;top:306px;font-size:12px;letter-spacing:-0.45px;">75.1</span>
<span class="t" style="right:634px;top:306px;font-size:12px;letter-spacing:-0.45px;">9.3</span>
<svg style="left:692px;top:306px" width="80" height="14" viewBox="0 0 80 14"><rect x="0" y="11" width="3" height="2" fill="#ff8a00"/><rect x="4" y="11" width="3" height="2" fill="#ff8a00"/><rect x="8" y="11" width="3" height="2" fill="#ff8a00"/><rect x="12" y="10" width="3" height="3" fill="#6fa85a"/><rect x="16" y="12" width="3" height="1" fill="#ff8a00"/><rect x="20" y="10" width="3" height="3" fill="#6fa85a"/><rect x="24" y="12" width="3" height="1" fill="#ff8a00"/><rect x="28" y="8" width="3" height="5" fill="#6fa85a"/><rect x="32" y="12" width="3" height="1" fill="#ff8a00"/><rect x="36" y="10" width="3" height="3" fill="#6fa85a"/><rect x="40" y="11" width="3" height="2" fill="#ff8a00"/><rect x="44" y="12" width="3" height="1" fill="#ff8a00"/><rect x="48" y="12" width="3" height="1" fill="#ff8a00"/><rect x="52" y="12" width="3" height="1" fill="#ff8a00"/><rect x="56" y="12" width="3" height="1" fill="#ff8a00"/><rect x="60" y="12" width="3" height="1" fill="#ff8a00"/><rect x="64" y="12" width="3" height="1" fill="#ff8a00"/><rect x="68" y="12" width="3" height="1" fill="#ff8a00"/><rect x="72" y="12" width="3" height="1" fill="#ff8a00"/><rect x="76" y="11" width="3" height="2" fill="#ff8a00"/></svg>
<div style="left:149px;top:335px;width:631px;height:1px;background:#dcdcdc"></div>
<span class="t" style="right:1130px;top:321px;font-size:12px;letter-spacing:-0.45px;">2</span>
<span class="t" style="left:196px;top:321px;font-size:12px;letter-spacing:-0.45px;">172.17.0.5</span>
<span class="t" style="right:934px;top:321px;font-size:12px;letter-spacing:-0.45px;">0.3%</span>
<span class="t" style="right:884px;top:321px;font-size:12px;letter-spacing:-0.45px;">304</span>
<span class="t" style="left:441px;top:321px;font-size:12px;letter-spacing:-0.45px;">7.4ms</span>
<span class="t" style="right:784px;top:321px;font-size:12px;letter-spacing:-0.45px;">13.5</span>
<span class="t" style="right:734px;top:321px;font-size:12px;letter-spacing:-0.45px;">5.5</span>
<span class="t" style="right:684px;top:321px;font-size:12px;letter-spacing:-0.45px;">55.5</span>
<span class="t" style="right:634px;top:321px;font-size:12px;letter-spacing:-0.45px;">7.5</span>
<svg style="left:692px;top:321px" width="80" height="14" viewBox="0 0 80 14"><rect x="0" y="12" width="3" height="1" fill="#ff8a00"/><rect x="4" y="12" width="3" height="1" fill="#ff8a00"/><rect x="8" y="12" width="3" height="1" fill="#ff8a00"/><rect x="12" y="12" width="3" height="1" fill="#ff8a00"/><rect x="16" y="12" width="3" height="1" fill="#ff8a00"/><rect x="20" y="12" width="3" height="1" fill="#ff8a00"/><rect x="24" y="12" width="3" height="1" fill="#ff8a00"/><rect x="28" y="12" width="3" height="1" fill="#ff8a00"/><rect x="32" y="11" width="3" height="2" fill="#ff8a00"/><rect x="36" y="12" width="3" height="1" fill="#ff8a00"/><rect x="40" y="12" width="3" height="1" fill="#ff8a00"/><rect x="44" y="12" width="3" height="1" fill="#ff8a00"/><rect x="48" y="10" width="3" height="3" fill="#6fa85a"/><rect x="52" y="12" width="3" height="1" fill="#ff8a00"/><rect x="56" y="10" width="3" height="3" fill="#6fa85a"/><rect x="60" y="11" width="3" height="2" fill="#ff8a00"/><rect x="64" y="11" width="3" height="2" fill="#ff8a00"/><rect x="68" y="12" width="3" height="1" fill="#ff8a00"/><rect x="72" y="12" width="3" height="1" fill="#ff8a00"/><rect x="76" y="12" width="3" height="1" fill="#ff8a00"/></svg>
<div style="left:149px;top:350px;width:631px;height:1px;background:#dcdcdc"></div>
<span class="t" style="right:1130px;top:336px;font-size:12px;letter-spacing:-0.45px;">3</span>
<span class="t" style="left:196px;top:336px;font-size:12px;letter-spacing:-0.45px;">10.33.32.157</span>
<span class="t" style="right:934px;top:336px;font-size:12px;letter-spacing:-0.45px;">0.0%</span>
<span class="t" style="right:884px;top:336px;font-size:12px;letter-spacing:-0.45px;">304</span>
<span class="t" style="left:441px;top:336px;font-size:12px;letter-spacing:-0.45px;">9.7ms</span>
<span class="t" style="right:784px;top:336px;font-size:12px;letter-spacing:-0.45px;">15.6</span>
<span class="t" style="right:734px;top:336px;font-size:12px;letter-spacing:-0.45px;">6.2</span>
<span class="t" style="right:684px;top:336px;font-size:12px;letter-spacing:-0.45px;">70.7</span>
<span class="t" style="right:634px;top:336px;font-size:12px;letter-spacing:-0.45px;">9.0</span>
<svg style="left:692px;top:336px" width="80" height="14" viewBox="0 0 80 14"><rect x="0" y="11" width="3" height="2" fill="#ff8a00"/><rect x="4" y="11" width="3" height="2" fill="#ff8a00"/><rect x="8" y="12" width="3" height="1" fill="#ff8a00"/><rect x="12" y="10" width="3" height="3" fill="#6fa85a"/><rect x="16" y="11" width="3" height="2" fill="#ff8a00"/><rect x="20" y="12" width="3" height="1" fill="#ff8a00"/><rect x="24" y="12" width="3" height="1" fill="#ff8a00"/><rect x="28" y="12" width="3" height="1" fill="#ff8a00"/><rect x="32" y="12" width="3" height="1" fill="#ff8a00"/><rect x="36" y="12" width="3" height="1" fill="#ff8a00"/><rect x="40" y="11" width="3" height="2" fill="#ff8a00"/><rect x="44" y="12" width="3" height="1" fill="#ff8a00"/><rect x="48" y="11" width="3" height="2" fill="#ff8a00"/><rect x="52" y="12" width="3" height="1" fill="#ff8a00"/><rect x="56" y="8" width="3" height="5" fill="#6fa85a"/><rect x="60" y="12" width="3" height="1" fill="#ff8a00"/><rect x="64" y="12" width="3" height="1" fill="#ff8a00"/><rect x="68" y="11" width="3" height="2" fill="#ff8a00"/><rect x="72" y="12" width="3" height="1" fill="#ff8a00"/><rect x="76" y="12" width="3" height="1" fill="#ff8a00"/></svg>
<div style="left:149px;top:365px;width:631px;height:1px;background:#dcdcdc"></div>
<span class="t" style="right:1130px;top:351px;font-size:12px;letter-spacing:-0.45px;">4</span>
<span class="t" style="left:196px;top:351px;font-size:12px;letter-spacing:-0.45px;">142.250.173.183</span>
<span class="t" style="right:934px;top:351px;font-size:12px;letter-spacing:-0.45px;">0.0%</span>
<span class="t" style="right:884px;top:351px;font-size:12px;letter-spacing:-0.45px;">304</span>
<span class="t" style="left:441px;top:351px;font-size:12px;letter-spacing:-0.45px;">23.7ms</span>
<span class="t" style="right:784px;top:351px;font-size:12px;letter-spacing:-0.45px;">27.0</span>
<span class="t" style="right:734px;top:351px;font-size:12px;letter-spacing:-0.45px;">16.1</span>
<span class="t" style="right:684px;top:351px;font-size:12px;letter-spacing:-0.45px;">84.4</span>
<span class="t" style="right:634px;top:351px;font-size:12px;letter-spacing:-0.45px;">9.5</span>
<svg style="left:692px;top:351px" width="80" height="14" viewBox="0 0 80 14"><rect x="0" y="11" width="3" height="2" fill="#ff8a00"/><rect x="4" y="10" width="3" height="3" fill="#6fa85a"/><rect x="8" y="11" width="3" height="2" fill="#ff8a00"/><rect x="12" y="11" width="3" height="2" fill="#ff8a00"/><rect x="16" y="11" width="3" height="2" fill="#ff8a00"/><rect x="20" y="11" width="3" height="2" fill="#ff8a00"/><rect x="24" y="11" width="3" height="2" fill="#ff8a00"/><rect x="28" y="9" width="3" height="4" fill="#6fa85a"/><rect x="32" y="10" width="3" height="3" fill="#6fa85a"/><rect x="36" y="10" width="3" height="3" fill="#6fa85a"/><rect x="40" y="10" width="3" height="3" fill="#6fa85a"/><rect x="44" y="9" width="3" height="4" fill="#6fa85a"/><rect x="48" y="10" width="3" height="3" fill="#6fa85a"/><rect x="52" y="11" width="3" height="2" fill="#ff8a00"/><rect x="56" y="10" width="3" height="3" fill="#6fa85a"/><rect x="60" y="11" width="3" height="2" fill="#ff8a00"/><rect x="64" y="10" width="3" height="3" fill="#6fa85a"/><rect x="68" y="10" width="3" height="3" fill="#6fa85a"/><rect x="72" y="11" width="3" height="2" fill="#ff8a00"/><rect x="76" y="11" width="3" height="2" fill="#ff8a00"/></svg>
<div style="left:149px;top:380px;width:631px;height:1px;background:#dcdcdc"></div>
<span class="t" style="right:1130px;top:366px;font-size:12px;letter-spacing:-0.45px;">5</span>
<span class="t" style="left:196px;top:366px;font-size:12px;letter-spacing:-0.45px;">142.250.173.182</span>
<span class="t" style="right:934px;top:366px;font-size:12px;letter-spacing:-0.45px;">4.9%</span>
<span class="t" style="right:884px;top:366px;font-size:12px;letter-spacing:-0.45px;">304</span>
<span class="t" style="left:441px;top:366px;font-size:12px;letter-spacing:-0.45px;">28.6ms</span>
<span class="t" style="right:784px;top:366px;font-size:12px;letter-spacing:-0.45px;">25.7</span>
<span class="t" style="right:734px;top:366px;font-size:12px;letter-spacing:-0.45px;">16.9</span>
<span class="t" style="right:684px;top:366px;font-size:12px;letter-spacing:-0.45px;">66.2</span>
<span class="t" style="right:634px;top:366px;font-size:12px;letter-spacing:-0.45px;">7.6</span>
<svg style="left:692px;top:366px" width="80" height="14" viewBox="0 0 80 14"><rect x="0" y="11" width="3" height="2" fill="#ff8a00"/><rect x="4" y="11" width="3" height="2" fill="#ff8a00"/><rect x="8" y="11" width="3" height="2" fill="#ff8a00"/><rect x="12" y="10" width="3" height="3" fill="#6fa85a"/><rect x="16" y="11" width="3" height="2" fill="#ff8a00"/><rect x="20" y="11" width="3" height="2" fill="#ff8a00"/><rect x="24" y="11" width="3" height="2" fill="#ff8a00"/><rect x="28" y="11" width="3" height="2" fill="#ff8a00"/><rect x="32" y="11" width="3" height="2" fill="#ff8a00"/><rect x="36" y="11" width="3" height="2" fill="#ff8a00"/><rect x="40" y="10" width="3" height="3" fill="#6fa85a"/><rect x="44" y="9" width="3" height="4" fill="#6fa85a"/><rect x="48" y="9" width="3" height="4" fill="#6fa85a"/><rect x="52" y="11" width="3" height="2" fill="#ff8a00"/><rect x="56" y="11" width="3" height="2" fill="#ff8a00"/><rect x="60" y="11" width="3" height="2" fill="#ff8a00"/><rect x="64" y="10" width="3" height="3" fill="#6fa85a"/><rect x="68" y="11" width="3" height="2" fill="#ff8a00"/><rect x="72" y="11" width="3" height="2" fill="#ff8a00"/><rect x="76" y="10" width="3" height="3" fill="#6fa85a"/></svg>
<div style="left:149px;top:395px;width:631px;height:1px;background:#dcdcdc"></div>
<span class="t" style="right:1130px;top:381px;font-size:12px;letter-spacing:-0.45px;">6</span>
<span class="t" style="left:196px;top:381px;font-size:12px;letter-spacing:-0.45px;">108.170.255.29</span>
<span class="t" style="right:934px;top:381px;font-size:12px;letter-spacing:-0.45px;">0.0%</span>
<span class="t" style="right:884px;top:381px;font-size:12px;letter-spacing:-0.45px;">304</span>
<span class="t" style="left:441px;top:381px;font-size:12px;letter-spacing:-0.45px;">33.7ms</span>
<span class="t" style="right:784px;top:381px;font-size:12px;letter-spacing:-0.45px;">25.4</span>
<span class="t" style="right:734px;top:381px;font-size:12px;letter-spacing:-0.45px;">17.0</span>
<span class="t" style="right:684px;top:381px;font-size:12px;letter-spacing:-0.45px;">51.6</span>
<span class="t" style="right:634px;top:381px;font-size:12px;letter-spacing:-0.45px;">7.2</span>
<svg style="left:692px;top:381px" width="80" height="14" viewBox="0 0 80 14"><rect x="0" y="11" width="3" height="2" fill="#ff8a00"/><rect x="4" y="7" width="3" height="6" fill="#4ccbcb"/><rect x="8" y="9" width="3" height="4" fill="#6fa85a"/><rect x="12" y="11" width="3" height="2" fill="#ff8a00"/><rect x="16" y="9" width="3" height="4" fill="#6fa85a"/><rect x="20" y="11" width="3" height="2" fill="#ff8a00"/><rect x="24" y="11" width="3" height="2" fill="#ff8a00"/><rect x="28" y="8" width="3" height="5" fill="#6fa85a"/><rect x="32" y="10" width="3" height="3" fill="#6fa85a"/><rect x="36" y="10" width="3" height="3" fill="#6fa85a"/><rect x="40" y="11" width="3" height="2" fill="#ff8a00"/><rect x="44" y="11" width="3" height="2" fill="#ff8a00"/><rect x="48" y="11" width="3" height="2" fill="#ff8a00"/><rect x="52" y="11" width="3" height="2" fill="#ff8a00"/><rect x="56" y="11" width="3" height="2" fill="#ff8a00"/><rect x="60" y="11" width="3" height="2" fill="#ff8a00"/><rect x="64" y="10" width="3" height="3" fill="#6fa85a"/><rect x="68" y="11" width="3" height="2" fill="#ff8a00"/><rect x="72" y="10" width="3" height="3" fill="#6fa85a"/><rect x="76" y="9" width="3" height="4" fill="#6fa85a"/></svg>
<div style="left:149px;top:410px;width:631px;height:1px;background:#dcdcdc"></div>
<span class="t" style="right:1130px;top:396px;font-size:12px;letter-spacing:-0.45px;">7</span>
<span class="t" style="left:196px;top:396px;font-size:12px;letter-spacing:-0.45px;">142.251.79.5</span>
<span class="t" style="right:934px;top:396px;font-size:12px;letter-spacing:-0.45px;">0.0%</span>
<span class="t" style="right:884px;top:396px;font-size:12px;letter-spacing:-0.45px;">304</span>
<span class="t" style="left:441px;top:396px;font-size:12px;letter-spacing:-0.45px;">58.2ms</span>
<span class="t" style="right:784px;top:396px;font-size:12px;letter-spacing:-0.45px;">24.7</span>
<span class="t" style="right:734px;top:396px;font-size:12px;letter-spacing:-0.45px;">17.3</span>
<span class="t" style="right:684px;top:396px;font-size:12px;letter-spacing:-0.45px;">97.1</span>
<span class="t" style="right:634px;top:396px;font-size:12px;letter-spacing:-0.45px;">7.8</span>
<svg style="left:692px;top:396px" width="80" height="14" viewBox="0 0 80 14"><rect x="0" y="10" width="3" height="3" fill="#6fa85a"/><rect x="4" y="11" width="3" height="2" fill="#ff8a00"/><rect x="8" y="9" width="3" height="4" fill="#6fa85a"/><rect x="12" y="11" width="3" height="2" fill="#ff8a00"/><rect x="16" y="7" width="3" height="6" fill="#4ccbcb"/><rect x="20" y="11" width="3" height="2" fill="#ff8a00"/><rect x="24" y="11" width="3" height="2" fill="#ff8a00"/><rect x="28" y="11" width="3" height="2" fill="#ff8a00"/><rect x="32" y="11" width="3" height="2" fill="#ff8a00"/><rect x="36" y="11" width="3" height="2" fill="#ff8a00"/><rect x="40" y="10" width="3" height="3" fill="#6fa85a"/><rect x="44" y="11" width="3" height="2" fill="#ff8a00"/><rect x="48" y="11" width="3" height="2" fill="#ff8a00"/><rect x="52" y="9" width="3" height="4" fill="#6fa85a"/><rect x="56" y="10" width="3" height="3" fill="#6fa85a"/><rect x="60" y="11" width="3" height="2" fill="#ff8a00"/><rect x="64" y="9" width="3" height="4" fill="#6fa85a"/><rect x="68" y="11" width="3" height="2" fill="#ff8a00"/><rect x="72" y="11" width="3" height="2" fill="#ff8a00"/><rect x="76" y="6" width="3" height="7" fill="#4ccbcb"/></svg>
<div style="left:149px;top:425px;width:631px;height:1px;background:#dcdcdc"></div>
<span class="t" style="right:1130px;top:411px;font-size:12px;letter-spacing:-0.45px;">8</span>
<span class="t" style="left:196px;top:411px;font-size:12px;letter-spacing:-0.45px;">8.8.8.8</span>
<span class="t" style="right:934px;top:411px;font-size:12px;letter-spacing:-0.45px;">0.0%</span>
<span class="t" style="right:884px;top:411px;font-size:12px;letter-spacing:-0.45px;">304</span>
<span class="t" style="left:441px;top:411px;font-size:12px;letter-spacing:-0.45px;">35.6ms</span>
<span class="t" style="right:784px;top:411px;font-size:12px;letter-spacing:-0.45px;">26.1</span>
<span class="t" style="right:734px;top:411px;font-size:12px;letter-spacing:-0.45px;">17.4</span>
<span class="t" style="right:684px;top:411px;font-size:12px;letter-spacing:-0.45px;">87.8</span>
<span class="t" style="right:634px;top:411px;font-size:12px;letter-spacing:-0.45px;">8.3</span>
<svg style="left:692px;top:411px" width="80" height="14" viewBox="0 0 80 14"><rect x="0" y="6" width="3" height="7" fill="#4ccbcb"/><rect x="4" y="6" width="3" height="7" fill="#4ccbcb"/><rect x="8" y="10" width="3" height="3" fill="#6fa85a"/><rect x="12" y="11" width="3" height="2" fill="#ff8a00"/><rect x="16" y="10" width="3" height="3" fill="#6fa85a"/><rect x="20" y="11" width="3" height="2" fill="#ff8a00"/><rect x="24" y="11" width="3" height="2" fill="#ff8a00"/><rect x="28" y="10" width="3" height="3" fill="#6fa85a"/><rect x="32" y="11" width="3" height="2" fill="#ff8a00"/><rect x="36" y="11" width="3" height="2" fill="#ff8a00"/><rect x="40" y="11" width="3" height="2" fill="#ff8a00"/><rect x="44" y="8" width="3" height="5" fill="#6fa85a"/><rect x="48" y="11" width="3" height="2" fill="#ff8a00"/><rect x="52" y="11" width="3" height="2" fill="#ff8a00"/><rect x="56" y="11" width="3" height="2" fill="#ff8a00"/><rect x="60" y="11" width="3" height="2" fill="#ff8a00"/><rect x="64" y="10" width="3" height="3" fill="#6fa85a"/><rect x="68" y="10" width="3" height="3" fill="#6fa85a"/><rect x="72" y="9" width="3" height="4" fill="#6fa85a"/><rect x="76" y="9" width="3" height="4" fill="#6fa85a"/></svg>
<div style="left:149px;top:547px;width:631px;height:14px;background:#d6d6d6"></div>
<div style="left:149px;top:547px;width:14px;height:14px;background:#f0f0f0;border-right:1px solid #c0c0c0;box-shadow:inset 1px 1px #fff;box-sizing:border-box"></div>
<div style="left:163px;top:547px;width:461px;height:14px;background:#f0f0f0;border-right:1px solid #a0a0a0;box-shadow:inset 1px 1px #fff;box-sizing:border-box"></div>
<div style="left:766px;top:547px;width:14px;height:14px;background:#f0f0f0;border-left:1px solid #c0c0c0;box-shadow:inset 1px 1px #fff;box-sizing:border-box"></div>
<svg style="left:152px;top:550px" width="8" height="8" viewBox="0 0 8 8"><path d="M0 4L4 0V2.5H7V5.5H4V8Z" fill="#000"/></svg>
<svg style="left:770px;top:550px" width="8" height="8" viewBox="0 0 8 8"><path d="M8 4L4 0V2.5H1V5.5H4V8Z" fill="#000"/></svg>
<div style="left:148px;top:561px;width:633px;height:1px;background:#a0a0a0"></div>
<div style="left:148px;top:563px;width:633px;height:18px;background:#f0f0f0;border-left:1px solid #a0a0a0;box-sizing:border-box"></div>
<span class="t" style="left:151px;top:565px;font-size:12px;letter-spacing:-0.45px;">8 items</span>
<div style="left:829px;top:85px;width:467px;height:500px;background:#000"></div>
<div style="left:830px;top:86px;width:465px;height:498px;background:#f0f0f0"></div>
<div style="left:830px;top:86px;width:465px;height:22px;background:#c0c0c0"></div>
<span class="t" style="left:835px;top:92px;font-size:12px;letter-spacing:-0.45px;color:#f4f4fa">Ping (Running)</span>
<div style="left:1259px;top:90px;width:15px;height:15px;background:#ece8ec;border:1px solid #404040;box-shadow:inset 1px 1px #fff;box-sizing:border-box"></div>
<div style="left:1262px;top:93px;width:9px;height:9px;border:1px solid #404040;border-top-width:2px;box-sizing:border-box"></div>
<div style="left:1276px;top:90px;width:15px;height:15px;background:#ece8ec;border:1px solid #404040;box-shadow:inset 1px 1px #fff;box-sizing:border-box"></div>
<svg style="left:1276px;top:90px" width="15" height="15" viewBox="0 0 15 15"><path d="M4.2 4.2L10.8 10.8M10.8 4.2L4.2 10.8" stroke="#303030" stroke-width="2" stroke-linecap="round"/></svg>
<div style="left:887px;top:113px;width:62px;height:22px;background:#d9d9d9;border-right:1px solid #c8c8c8;box-sizing:border-box"></div>
<div style="left:834px;top:110px;width:1px;height:25px;background:#fff"></div>
<div style="left:834px;top:110px;width:52px;height:1px;background:#fff"></div>
<div style="left:886px;top:110px;width:1px;height:25px;background:#696969"></div>
<span class="t" style="left:842px;top:115px;font-size:12px;letter-spacing:-0.45px;">General</span>
<span class="t" style="left:893px;top:118px;font-size:12px;letter-spacing:-0.45px;">Advanced</span>
<div style="left:832px;top:135px;width:368px;height:148px;border-top:1px solid #fff;border-left:1px solid #fff;border-right:1px solid #a0a0a0;border-bottom:1px solid #a0a0a0;box-sizing:border-box"></div>
<div style="left:834px;top:135px;width:52px;height:1px;background:#f0f0f0"></div>
<span class="t" style="right:413px;top:145px;font-size:12px;letter-spacing:-0.45px;">Ping To:</span>
<div style="left:912px;top:143px;width:279px;height:17px;background:#fff;border:1px solid #a0a0a0;box-sizing:border-box"></div>
<div style="left:912px;top:160px;width:279px;height:1px;background:#fff"></div>
<span class="t" style="left:915px;top:145px;font-size:12px;letter-spacing:-0.45px;color:#000">8.8.8.8</span>
<span class="t" style="right:413px;top:168px;font-size:12px;letter-spacing:-0.45px;">Interface:</span>
<div style="left:912px;top:166px;width:261px;height:17px;background:#f0f0f0;border:1px solid #a0a0a0;box-sizing:border-box"></div>
<div style="left:912px;top:183px;width:261px;height:1px;background:#fff"></div>
<svg style="left:1178px;top:172px" width="11" height="6" viewBox="0 0 11 6"><path d="M0.8 0H10L5.4 4.8Z" fill="#000"/></svg>
<div style="left:912px;top:190px;width:13px;height:13px;background:#fff;border:1px solid #707070;box-sizing:border-box"></div>
<span class="t" style="left:928px;top:191px;font-size:12px;letter-spacing:-0.45px;">ARP Ping</span>
<span class="t" style="right:413px;top:214px;font-size:12px;letter-spacing:-0.45px;">Packet Count:</span>
<div style="left:912px;top:212px;width:261px;height:17px;background:#f0f0f0;border:1px solid #a0a0a0;box-sizing:border-box"></div>
<div style="left:912px;top:229px;width:261px;height:1px;background:#fff"></div>
<svg style="left:1178px;top:218px" width="11" height="6" viewBox="0 0 11 6"><path d="M0.8 0H10L5.4 4.8Z" fill="#000"/></svg>
<span class="t" style="right:413px;top:237px;font-size:12px;letter-spacing:-0.45px;">Timeout:</span>
<div style="left:912px;top:235px;width:261px;height:17px;background:#fff;border:1px solid #a0a0a0;box-sizing:border-box"></div>
<div style="left:912px;top:252px;width:261px;height:1px;background:#fff"></div>
<span class="t" style="left:915px;top:237px;font-size:12px;letter-spacing:-0.45px;color:#000">1000</span>
<span class="t" style="left:1176px;top:237px;font-size:11px;letter-spacing:-0.3px;">ms</span>
<div style="left:1204px;top:114px;width:82px;height:23px;background:#f0f0f0;border:1px solid #a0a0a0;box-sizing:border-box;box-shadow:inset 1px 1px #fff;"></div>
<span class="t" style="left:1204px;width:82px;text-align:center;top:119px;font-size:12px;letter-spacing:-0.45px;color:#858585">Start</span>
<div style="left:1204px;top:140px;width:82px;height:23px;background:#f0f0f0;border:1px solid #000;box-sizing:border-box;box-shadow:inset 1px 1px #fff;"></div>
<span class="t" style="left:1204px;width:82px;text-align:center;top:145px;font-size:12px;letter-spacing:-0.45px;">Stop</span>
<div style="left:1204px;top:166px;width:82px;height:23px;background:#f0f0f0;border:1px solid #a0a0a0;box-sizing:border-box;box-shadow:inset 1px 1px #fff;"></div>
<span class="t" style="left:1204px;width:82px;text-align:center;top:171px;font-size:12px;letter-spacing:-0.45px;">Close</span>
<div style="left:1204px;top:192px;width:82px;height:23px;background:#f0f0f0;border:1px solid #a0a0a0;box-sizing:border-box;box-shadow:inset 1px 1px #fff;"></div>
<span class="t" style="left:1204px;width:82px;text-align:center;top:197px;font-size:12px;letter-spacing:-0.45px;">New Window</span>
<div style="left:832px;top:288px;width:460px;height:273px;background:#fff;border:1px solid #a0a0a0;box-sizing:border-box"></div>
<div style="left:833px;top:289px;width:458px;height:16px;background:#f0f0f0"></div>
<div style="left:833px;top:305px;width:458px;height:1px;background:#a0a0a0"></div>
<span class="t" style="left:835px;top:291px;font-size:12px;letter-spacing:-0.45px;">Seq #</span>
<div style="left:877px;top:289px;width:1px;height:16px;background:#a0a0a0"></div>
<div style="left:877px;top:306px;width:1px;height:255px;background:#dcdcdc"></div>
<span class="t" style="left:879px;top:291px;font-size:12px;letter-spacing:-0.45px;">Host</span>
<div style="left:1027px;top:289px;width:1px;height:16px;background:#a0a0a0"></div>
<div style="left:1027px;top:306px;width:1px;height:255px;background:#dcdcdc"></div>
<span class="t" style="left:1029px;top:291px;font-size:12px;letter-spacing:-0.45px;">Time</span>
<div style="left:1077px;top:289px;width:1px;height:16px;background:#a0a0a0"></div>
<div style="left:1077px;top:306px;width:1px;height:255px;background:#dcdcdc"></div>
<span class="t" style="left:1079px;top:291px;font-size:12px;letter-spacing:-0.45px;">Reply Size</span>
<div style="left:1137px;top:289px;width:1px;height:16px;background:#a0a0a0"></div>
<div style="left:1137px;top:306px;width:1px;height:255px;background:#dcdcdc"></div>
<span class="t" style="left:1139px;top:291px;font-size:12px;letter-spacing:-0.45px;">TTL</span>
<div style="left:1172px;top:289px;width:1px;height:16px;background:#a0a0a0"></div>
<div style="left:1172px;top:306px;width:1px;height:255px;background:#dcdcdc"></div>
<span class="t" style="left:1174px;top:291px;font-size:12px;letter-spacing:-0.45px;">Status</span>
<div style="left:1272px;top:289px;width:1px;height:16px;background:#a0a0a0"></div>
<div style="left:1272px;top:306px;width:1px;height:255px;background:#dcdcdc"></div>
<svg style="left:868px;top:293px" width="7" height="6" viewBox="0 0 7 6"><path d="M6.5 5.5H0.5" stroke="#fff" stroke-width="1"/><path d="M3.5 0.5L6.5 5.5" stroke="#fff" stroke-width="1"/><path d="M0.5 5.5L3.5 0.5" stroke="#909090" stroke-width="1"/></svg>
<div style="left:1276px;top:289px;width:1px;height:16px;background:#a0a0a0"></div>
<svg style="left:1279px;top:295px" width="11" height="6" viewBox="0 0 11 6"><path d="M0.8 0H10L5.4 4.8Z" fill="#000"/></svg>
<div style="left:833px;top:306px;width:444px;height:254px;overflow:hidden">
<div style="left:0;top:14px;width:444px;height:1px;background:#dcdcdc"></div>
<span class="t" style="right:403px;top:0px;font-size:12px;letter-spacing:-0.45px">298</span>
<span class="t" style="left:47px;top:0px;font-size:12px;letter-spacing:-0.45px">8.8.8.8</span>
<span class="t" style="left:197px;top:0px;font-size:12px;letter-spacing:-0.45px">29ms</span>
<span class="t" style="right:142px;top:0px;font-size:12px;letter-spacing:-0.45px">50</span>
<span class="t" style="right:107px;top:0px;font-size:12px;letter-spacing:-0.45px">118</span>
<div style="left:0;top:29px;width:444px;height:1px;background:#dcdcdc"></div>
<span class="t" style="right:403px;top:15px;font-size:12px;letter-spacing:-0.45px">299</span>
<span class="t" style="left:47px;top:15px;font-size:12px;letter-spacing:-0.45px">8.8.8.8</span>
<span class="t" style="left:197px;top:15px;font-size:12px;letter-spacing:-0.45px">41ms</span>
<span class="t" style="right:142px;top:15px;font-size:12px;letter-spacing:-0.45px">50</span>
<span class="t" style="right:107px;top:15px;font-size:12px;letter-spacing:-0.45px">118</span>
<div style="left:0;top:44px;width:444px;height:1px;background:#dcdcdc"></div>
<span class="t" style="right:403px;top:30px;font-size:12px;letter-spacing:-0.45px">300</span>
<span class="t" style="left:47px;top:30px;font-size:12px;letter-spacing:-0.45px">8.8.8.8</span>
<span class="t" style="left:197px;top:30px;font-size:12px;letter-spacing:-0.45px">25ms</span>
<span class="t" style="right:142px;top:30px;font-size:12px;letter-spacing:-0.45px">50</span>
<span class="t" style="right:107px;top:30px;font-size:12px;letter-spacing:-0.45px">118</span>
<div style="left:0;top:59px;width:444px;height:1px;background:#dcdcdc"></div>
<span class="t" style="right:403px;top:45px;font-size:12px;letter-spacing:-0.45px">301</span>
<span class="t" style="left:47px;top:45px;font-size:12px;letter-spacing:-0.45px">8.8.8.8</span>
<span class="t" style="left:197px;top:45px;font-size:12px;letter-spacing:-0.45px">20ms</span>
<span class="t" style="right:142px;top:45px;font-size:12px;letter-spacing:-0.45px">50</span>
<span class="t" style="right:107px;top:45px;font-size:12px;letter-spacing:-0.45px">118</span>
<div style="left:0;top:74px;width:444px;height:1px;background:#dcdcdc"></div>
<span class="t" style="right:403px;top:60px;font-size:12px;letter-spacing:-0.45px">302</span>
<span class="t" style="left:47px;top:60px;font-size:12px;letter-spacing:-0.45px">8.8.8.8</span>
<span class="t" style="left:197px;top:60px;font-size:12px;letter-spacing:-0.45px">35ms</span>
<span class="t" style="right:142px;top:60px;font-size:12px;letter-spacing:-0.45px">50</span>
<span class="t" style="right:107px;top:60px;font-size:12px;letter-spacing:-0.45px">118</span>
<div style="left:0;top:89px;width:444px;height:1px;background:#dcdcdc"></div>
<span class="t" style="right:403px;top:75px;font-size:12px;letter-spacing:-0.45px">303</span>
<span class="t" style="left:47px;top:75px;font-size:12px;letter-spacing:-0.45px">8.8.8.8</span>
<span class="t" style="left:197px;top:75px;font-size:12px;letter-spacing:-0.45px">29ms</span>
<span class="t" style="right:142px;top:75px;font-size:12px;letter-spacing:-0.45px">50</span>
<span class="t" style="right:107px;top:75px;font-size:12px;letter-spacing:-0.45px">118</span>
<div style="left:0;top:104px;width:444px;height:1px;background:#dcdcdc"></div>
<span class="t" style="right:403px;top:90px;font-size:12px;letter-spacing:-0.45px">304</span>
<span class="t" style="left:47px;top:90px;font-size:12px;letter-spacing:-0.45px">8.8.8.8</span>
<span class="t" style="left:197px;top:90px;font-size:12px;letter-spacing:-0.45px">34ms</span>
<span class="t" style="right:142px;top:90px;font-size:12px;letter-spacing:-0.45px">50</span>
<span class="t" style="right:107px;top:90px;font-size:12px;letter-spacing:-0.45px">118</span>
<div style="left:0;top:119px;width:444px;height:1px;background:#dcdcdc"></div>
<span class="t" style="right:403px;top:105px;font-size:12px;letter-spacing:-0.45px">305</span>
<span class="t" style="left:47px;top:105px;font-size:12px;letter-spacing:-0.45px">8.8.8.8</span>
<span class="t" style="left:197px;top:105px;font-size:12px;letter-spacing:-0.45px">35ms</span>
<span class="t" style="right:142px;top:105px;font-size:12px;letter-spacing:-0.45px">50</span>
<span class="t" style="right:107px;top:105px;font-size:12px;letter-spacing:-0.45px">118</span>
<div style="left:0;top:134px;width:444px;height:1px;background:#dcdcdc"></div>
<span class="t" style="right:403px;top:120px;font-size:12px;letter-spacing:-0.45px">306</span>
<span class="t" style="left:47px;top:120px;font-size:12px;letter-spacing:-0.45px">8.8.8.8</span>
<span class="t" style="left:197px;top:120px;font-size:12px;letter-spacing:-0.45px">18ms</span>
<span class="t" style="right:142px;top:120px;font-size:12px;letter-spacing:-0.45px">50</span>
<span class="t" style="right:107px;top:120px;font-size:12px;letter-spacing:-0.45px">118</span>
<div style="left:0;top:149px;width:444px;height:1px;background:#dcdcdc"></div>
<span class="t" style="right:403px;top:135px;font-size:12px;letter-spacing:-0.45px">307</span>
<span class="t" style="left:47px;top:135px;font-size:12px;letter-spacing:-0.45px">8.8.8.8</span>
<span class="t" style="left:197px;top:135px;font-size:12px;letter-spacing:-0.45px">30ms</span>
<span class="t" style="right:142px;top:135px;font-size:12px;letter-spacing:-0.45px">50</span>
<span class="t" style="right:107px;top:135px;font-size:12px;letter-spacing:-0.45px">118</span>
<div style="left:0;top:164px;width:444px;height:1px;background:#dcdcdc"></div>
<span class="t" style="right:403px;top:150px;font-size:12px;letter-spacing:-0.45px">308</span>
<span class="t" style="left:47px;top:150px;font-size:12px;letter-spacing:-0.45px">8.8.8.8</span>
<span class="t" style="left:197px;top:150px;font-size:12px;letter-spacing:-0.45px">26ms</span>
<span class="t" style="right:142px;top:150px;font-size:12px;letter-spacing:-0.45px">50</span>
<span class="t" style="right:107px;top:150px;font-size:12px;letter-spacing:-0.45px">118</span>
<div style="left:0;top:179px;width:444px;height:1px;background:#dcdcdc"></div>
<span class="t" style="right:403px;top:165px;font-size:12px;letter-spacing:-0.45px">309</span>
<span class="t" style="left:47px;top:165px;font-size:12px;letter-spacing:-0.45px">8.8.8.8</span>
<span class="t" style="left:197px;top:165px;font-size:12px;letter-spacing:-0.45px">19ms</span>
<span class="t" style="right:142px;top:165px;font-size:12px;letter-spacing:-0.45px">50</span>
<span class="t" style="right:107px;top:165px;font-size:12px;letter-spacing:-0.45px">118</span>
<div style="left:0;top:194px;width:444px;height:1px;background:#dcdcdc"></div>
<span class="t" style="right:403px;top:180px;font-size:12px;letter-spacing:-0.45px">310</span>
<span class="t" style="left:47px;top:180px;font-size:12px;letter-spacing:-0.45px">8.8.8.8</span>
<span class="t" style="left:197px;top:180px;font-size:12px;letter-spacing:-0.45px">35ms</span>
<span class="t" style="right:142px;top:180px;font-size:12px;letter-spacing:-0.45px">50</span>
<span class="t" style="right:107px;top:180px;font-size:12px;letter-spacing:-0.45px">118</span>
<div style="left:0;top:209px;width:444px;height:1px;background:#dcdcdc"></div>
<span class="t" style="right:403px;top:195px;font-size:12px;letter-spacing:-0.45px">311</span>
<span class="t" style="left:47px;top:195px;font-size:12px;letter-spacing:-0.45px">8.8.8.8</span>
<span class="t" style="left:197px;top:195px;font-size:12px;letter-spacing:-0.45px">38ms</span>
<span class="t" style="right:142px;top:195px;font-size:12px;letter-spacing:-0.45px">50</span>
<span class="t" style="right:107px;top:195px;font-size:12px;letter-spacing:-0.45px">118</span>
<div style="left:0;top:224px;width:444px;height:1px;background:#dcdcdc"></div>
<span class="t" style="right:403px;top:210px;font-size:12px;letter-spacing:-0.45px">312</span>
<span class="t" style="left:47px;top:210px;font-size:12px;letter-spacing:-0.45px">8.8.8.8</span>
<span class="t" style="left:197px;top:210px;font-size:12px;letter-spacing:-0.45px">28ms</span>
<span class="t" style="right:142px;top:210px;font-size:12px;letter-spacing:-0.45px">50</span>
<span class="t" style="right:107px;top:210px;font-size:12px;letter-spacing:-0.45px">118</span>
<div style="left:0;top:239px;width:444px;height:1px;background:#dcdcdc"></div>
<span class="t" style="right:403px;top:225px;font-size:12px;letter-spacing:-0.45px">313</span>
<span class="t" style="left:47px;top:225px;font-size:12px;letter-spacing:-0.45px">8.8.8.8</span>
<span class="t" style="left:197px;top:225px;font-size:12px;letter-spacing:-0.45px">41ms</span>
<span class="t" style="right:142px;top:225px;font-size:12px;letter-spacing:-0.45px">50</span>
<span class="t" style="right:107px;top:225px;font-size:12px;letter-spacing:-0.45px">118</span>
<div style="left:0;top:254px;width:444px;height:1px;background:#dcdcdc"></div>
<span class="t" style="right:403px;top:240px;font-size:12px;letter-spacing:-0.45px">314</span>
<span class="t" style="left:47px;top:240px;font-size:12px;letter-spacing:-0.45px">8.8.8.8</span>
<span class="t" style="left:197px;top:240px;font-size:12px;letter-spacing:-0.45px">33ms</span>
<span class="t" style="right:142px;top:240px;font-size:12px;letter-spacing:-0.45px">50</span>
<span class="t" style="right:107px;top:240px;font-size:12px;letter-spacing:-0.45px">118</span>
</div>
<div style="left:1276px;top:306px;width:15px;height:254px;background:#d4d4d4;border-left:1px solid #a0a0a0;box-sizing:border-box"></div>
<div style="left:1277px;top:306px;width:14px;height:15px;background:#f0f0f0;border-bottom:1px solid #a0a0a0;box-shadow:inset 1px 1px #fff;box-sizing:border-box"></div>
<svg style="left:1279px;top:309px" width="10" height="8" viewBox="0 0 10 8"><path d="M5 0.5L0.5 5H3.5V7.5H6.5V5H9.5Z" fill="#000"/></svg>
<div style="left:1277px;top:535px;width:14px;height:11px;background:#f0f0f0;border-top:1px solid #a0a0a0;border-bottom:1px solid #a0a0a0;box-sizing:border-box"></div>
<div style="left:1277px;top:546px;width:14px;height:14px;background:#f0f0f0;border-top:1px solid #a0a0a0;box-shadow:inset 1px 1px #fff;box-sizing:border-box"></div>
<svg style="left:1279px;top:549px" width="10" height="8" viewBox="0 0 10 8"><path d="M5 7.5L0.5 3H3.5V0.5H6.5V3H9.5Z" fill="#000"/></svg>
<div style="left:832px;top:561px;width:461px;height:20px;background:#f0f0f0;border-top:1px solid #a0a0a0;border-left:1px solid #a0a0a0;box-sizing:border-box"></div>
<div style="left:833px;top:562px;width:1px;height:18px;background:#a0a0a0"></div>
<span class="t" style="left:836px;top:565px;font-size:12px;letter-spacing:-0.45px;">315 items</span>
<div style="left:889px;top:562px;width:1px;height:18px;background:#a0a0a0"></div>
<span class="t" style="left:892px;top:565px;font-size:12px;letter-spacing:-0.45px;">315 of 315 packet...</span>
<div style="left:994px;top:562px;width:1px;height:18px;background:#a0a0a0"></div>
<span class="t" style="left:997px;top:565px;font-size:12px;letter-spacing:-0.45px;">0% packet loss</span>
<div style="left:1090px;top:562px;width:1px;height:18px;background:#a0a0a0"></div>
<span class="t" style="left:1093px;top:565px;font-size:12px;letter-spacing:-0.45px;">Min: 18 ms</span>
<div style="left:1156px;top:562px;width:1px;height:18px;background:#a0a0a0"></div>
<span class="t" style="left:1159px;top:565px;font-size:12px;letter-spacing:-0.45px;">Avg: 31 ms</span>
<div style="left:1222px;top:562px;width:1px;height:18px;background:#a0a0a0"></div>
<span class="t" style="left:1225px;top:565px;font-size:12px;letter-spacing:-0.45px;">Max: 69 ms</span>
<div style="left:144px;top:1px;width:140px;height:41px;border:3px solid #ff0000;box-sizing:border-box"></div>
<div style="left:826px;top:553px;width:477px;height:35px;border:3px solid #ff0000;box-sizing:border-box"></div>
<div style="left:1317px;top:295px;width:3px;height:303px;background:#a9b9c6"></div>
<div style="left:1317px;top:440px;width:3px;height:6px;background:#0b0f17"></div>
<div style="left:1317px;top:578px;width:3px;height:7px;background:#0b0f17"></div>
</body></html>
